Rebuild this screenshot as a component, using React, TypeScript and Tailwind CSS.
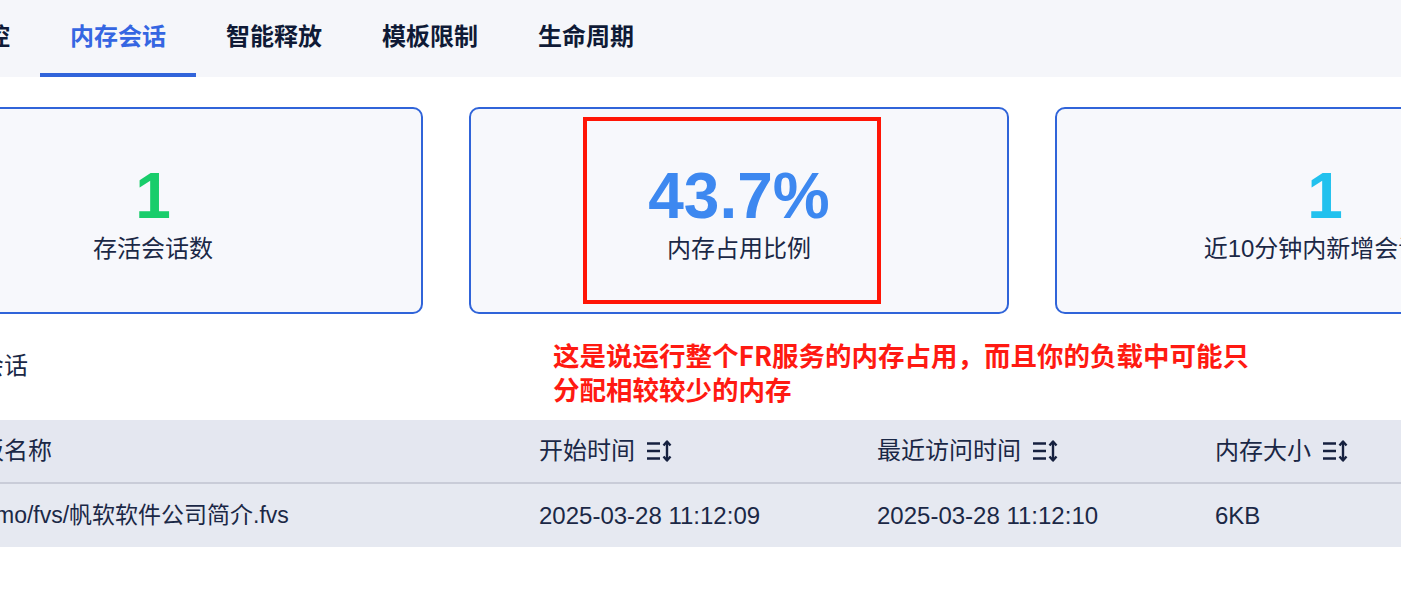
import React from "react";

const tabs = ["实时监控", "内存会话", "智能释放", "模板限制", "生命周期"];

const stats = [
    { value: "1", label: "存活会话数", color: "text-[#19cd6b]" },
    { value: "43.7%", label: "内存占用比例", color: "text-[#3d88f0]" },
    { value: "1", label: "近10分钟内新增会话数", color: "text-[#22c1ee]" },
];

const columns = ["模板名称", "开始时间", "最近访问时间", "内存大小"];
const row = ["/demo/fvs/帆软软件公司简介.fvs", "2025-03-28 11:12:09", "2025-03-28 11:12:10", "6KB"];

function SortIcon() {
    return (
        <svg width="26" height="22" viewBox="0 0 26 22" fill="none" stroke="#16213f" strokeWidth="2.4">
            <path d="M0 3.5h13M0 11h13M0 18.5h13" />
            <path d="M20 2v18" />
            <path d="M16.5 5.5L20 1.5l3.5 4" strokeLinejoin="round" />
            <path d="M16.5 16.5L20 20.5l3.5-4" strokeLinejoin="round" />
        </svg>
    );
}

export default function App() {
    return (
        <div className="relative w-[1401px] h-[611px] overflow-hidden bg-white font-['Liberation_Sans','Noto_Sans_CJK_SC',sans-serif] text-[#1b2846]">
            {/* Page content, scrolled horizontally */}
            <div className="ml-[-117px] w-[1760px]">
                {/* Tabs */}
                <div className="flex h-[77px] bg-[#f5f6fa] pl-[1px]">
                    {tabs.map((t, i) => (
                        <div
                            key={t}
                            className={
                                i === 1
                                    ? "w-[156px] h-[77px] flex items-center justify-center border-b-4 border-[#3164da] text-[24px] font-bold text-[#3566e2]"
                                    : "w-[156px] h-[77px] flex items-center justify-center border-b-4 border-transparent text-[24px] font-bold text-[#0f1a36]"
                            }
                        >
                            {t}
                        </div>
                    ))}
                </div>

                {/* Stat cards */}
                <div className="mt-[30px] grid grid-cols-[540px_540px_540px] gap-[46px]">
                    {stats.map((s) => (
                        <div key={s.label} className="h-[207px] rounded-[10px] border-2 border-[#3064d9] bg-[#f7f8fc] flex flex-col items-center pt-[55px] gap-[5px]">
                            <div className={`text-[64px] leading-[64px] font-bold ${s.color}`}>{s.value}</div>
                            <div className="text-[24px] leading-[32px] whitespace-nowrap">{s.label}</div>
                        </div>
                    ))}
                </div>

                {/* Section title */}
                <div className="mt-[36px] ml-[49px] w-fit text-[24px] leading-[32px]">存活会话</div>

                {/* Table */}
                <div className="mt-[38px]">
                    <div className="grid grid-cols-[583px_338px_338px_1fr] pl-[73px] h-[64px] items-center bg-[#e4e7f0] border-b-2 border-[#c9ccd8]">
                        {columns.map((c, i) => (
                            <div key={c} className="flex items-center gap-[12px] text-[24px] whitespace-nowrap">
                                <span>{c}</span>
                                {i > 0 && <SortIcon />}
                            </div>
                        ))}
                    </div>
                    <div className="grid grid-cols-[583px_338px_338px_1fr] pl-[73px] h-[63px] items-center bg-[#e6e9f1]">
                        {row.map((c, i) => (
                            <div key={i} className={i === 0 ? "text-[23px] whitespace-nowrap ml-[7px]" : "text-[24px] whitespace-nowrap"}>
                                {c}
                            </div>
                        ))}
                    </div>
                </div>
            </div>

            {/* Red annotation overlay */}
            <div className="absolute left-[583px] top-[117px] w-[298px] h-[187px] border-4 border-[#ff1506]" />
            <div className="absolute left-[553px] top-[338px] text-[26.5px] leading-[34px] font-bold text-[#ff1a12] whitespace-nowrap font-['Noto_Sans_CJK_SC','Liberation_Sans',sans-serif]">
                这是说运行整个FR服务的内存占用，而且你的负载中可能只
                <br />
                分配相较较少的内存
            </div>
        </div>
    );
}
